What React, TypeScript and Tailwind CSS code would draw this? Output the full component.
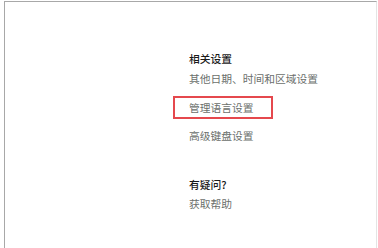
const font = { fontFamily: '"Noto Sans CJK SC", "Noto Sans", sans-serif' };

export default function App() {
  return (
    <div className="w-[378px] h-[248px] bg-white overflow-hidden" style={font}>
      <div className="ml-[4px] mt-[1px] w-[373px] h-[260px] border-l border-t border-r border-[#a8a8a8] border-r-[#e4e4e4]">
        <div className="flex flex-col items-start pl-[168px] pt-[49px] text-[10.75px]">
          <div className="pl-4 h-[16px] leading-[16px] font-medium text-[#1a1a1a]">相关设置</div>
          <div className="mt-[4px] pl-4 h-[16px] leading-[16px] text-[#6b6f6c]">其他日期、时间和区域设置</div>
          <div className="mt-[9px] flex w-[100px] h-[23px] items-center border-2 border-[#e5484d]">
            <span className="ml-3.5 leading-[19px] text-[#6b6f6c]">管理语言设置</span>
          </div>
          <div className="mt-[9px] pl-4 h-[16px] leading-[16px] text-[#6b6f6c]">高级键盘设置</div>
          <div className="mt-[33px] pl-4 h-[16px] leading-[16px] font-medium text-[#1a1a1a]">有疑问?</div>
          <div className="mt-[3px] pl-4 h-[16px] leading-[16px] text-[#6b6f6c]">获取帮助</div>
        </div>
      </div>
    </div>
  );
}
